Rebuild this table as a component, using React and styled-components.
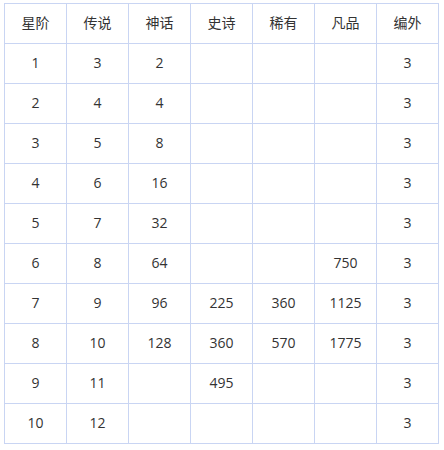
import React from "react";
import styled, { createGlobalStyle } from "styled-components";

const Global = createGlobalStyle`
  html, body { margin: 0; padding: 0; background: #ffffff; }
  body { font-family: "Microsoft YaHei", "Noto Sans CJK SC", "Noto Sans", sans-serif; }
`;

const Page = styled.div`
  padding: 3px 0 0 4px;
`;

const Grid = styled.div`
  display: grid;
  grid-template-columns: repeat(7, 61px);
  grid-auto-rows: 39px;
  gap: 1px;
  padding: 1px;
  width: max-content;
  background: #c9d5f3;
`;

const Cell = styled.div`
  background: #ffffff;
  display: flex;
  align-items: center;
  justify-content: center;
  font-size: 14px;
  line-height: 16px;
  color: #333333;
  font-family: ${(p) => (p.$head ? '"Noto Sans CJK SC", sans-serif' : '"Open Sans", "Noto Sans CJK SC", sans-serif')};
  padding-bottom: ${(p) => (p.$head ? "3px" : "2px")};
`;

const headers = ["星阶", "传说", "神话", "史诗", "稀有", "凡品", "编外"];
const rows = [
  ["1", "3", "2", "", "", "", "3"],
  ["2", "4", "4", "", "", "", "3"],
  ["3", "5", "8", "", "", "", "3"],
  ["4", "6", "16", "", "", "", "3"],
  ["5", "7", "32", "", "", "", "3"],
  ["6", "8", "64", "", "", "750", "3"],
  ["7", "9", "96", "225", "360", "1125", "3"],
  ["8", "10", "128", "360", "570", "1775", "3"],
  ["9", "11", "", "495", "", "", "3"],
  ["10", "12", "", "", "", "", "3"],
];

export default function App() {
  return (
    <Page>
      <Global />
      <Grid>
        {headers.map((h) => (
          <Cell key={h} $head>
            {h}
          </Cell>
        ))}
        {rows.map((r, i) =>
          r.map((v, j) => <Cell key={`${i}-${j}`}>{v}</Cell>)
        )}
      </Grid>
    </Page>
  );
}
